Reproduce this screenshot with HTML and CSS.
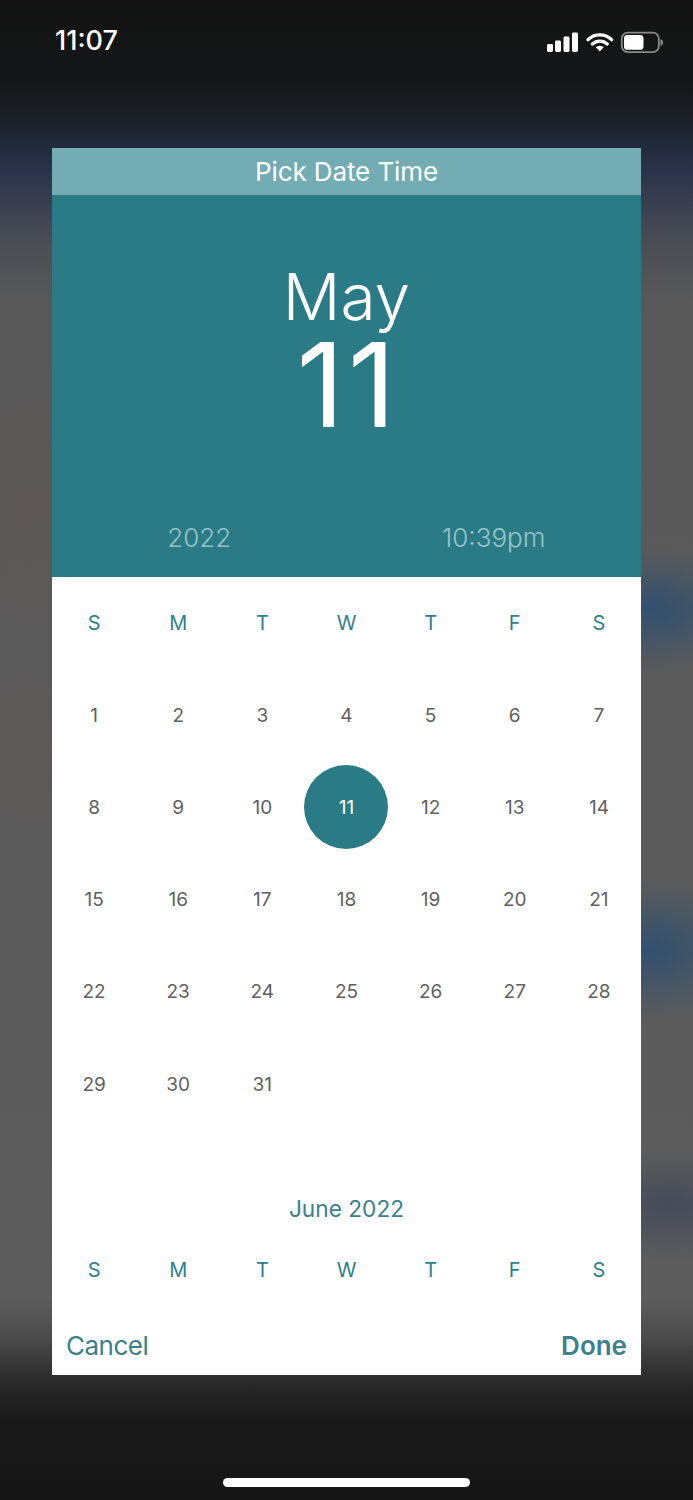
FILE: index.html
```html
<!DOCTYPE html>
<html lang="en">
<head>
<meta charset="utf-8">
<title>Pick Date Time</title>
<link rel="stylesheet" href="styles.css">
</head>
<body>
<div class="screen">
  <header class="status">
    <span class="clock">11:07</span>
    <svg class="status-icons" width="120" height="24" viewBox="0 0 120 24" aria-hidden="true">
      <rect x="0" y="13" width="6" height="8" rx="1.4" fill="#fff"/>
      <rect x="8" y="9.5" width="6" height="11.5" rx="1.4" fill="#fff"/>
      <rect x="16.5" y="5.5" width="6" height="15.5" rx="1.4" fill="#fff"/>
      <rect x="25" y="1.5" width="6" height="19.5" rx="1.4" fill="#fff"/>
      <path d="M41 8.6a17 17 0 0 1 23.6 0" fill="none" stroke="#fff" stroke-width="3.4" stroke-linecap="round"/>
      <path d="M45.3 13a11 11 0 0 1 15 0" fill="none" stroke="#fff" stroke-width="3.2" stroke-linecap="round"/>
      <path d="M48.8 16.2l4 4.4 4-4.4a6 6 0 0 0-8 0z" fill="#fff"/>
      <rect x="74.8" y="1.6" width="37" height="19.6" rx="6" fill="none" stroke="#8a8a8a" stroke-width="1.8"/>
      <rect x="77" y="4" width="19.5" height="14.8" rx="3.4" fill="#fff"/>
      <path d="M113.5 8v7a3.6 3.6 0 0 0 2.6-3.5 3.6 3.6 0 0 0-2.6-3.5z" fill="#8a8a8a"/>
    </svg>
  </header>

  <main class="dialog">
    <div class="title">Pick Date Time</div>
    <section class="hero">
      <div class="hero-month">May</div>
      <div class="hero-day">11</div>
      <div class="hero-meta">
        <span class="hero-year">2022</span>
        <span class="hero-time">10:39pm</span>
      </div>
    </section>
    <section class="calendar">
      <div class="row week"><span>S</span><span>M</span><span>T</span><span>W</span><span>T</span><span>F</span><span>S</span></div>
      <div class="row"><span>1</span><span>2</span><span>3</span><span>4</span><span>5</span><span>6</span><span>7</span></div>
      <div class="row"><span>8</span><span>9</span><span>10</span><span class="selected">11</span><span>12</span><span>13</span><span>14</span></div>
      <div class="row"><span>15</span><span>16</span><span>17</span><span>18</span><span>19</span><span>20</span><span>21</span></div>
      <div class="row"><span>22</span><span>23</span><span>24</span><span>25</span><span>26</span><span>27</span><span>28</span></div>
      <div class="row"><span>29</span><span>30</span><span>31</span><span></span><span></span><span></span><span></span></div>
      <div class="next-month">June 2022</div>
      <div class="row week next-week"><span>S</span><span>M</span><span>T</span><span>W</span><span>T</span><span>F</span><span>S</span></div>
    </section>
    <footer class="actions">
      <span class="cancel">Cancel</span>
      <span class="done">Done</span>
    </footer>
  </main>

  <div class="home-zone"><div class="home-bar"></div></div>
</div>
</body>
</html>
```
FILE: styles.css
```css
* { box-sizing: border-box; }
html, body { margin: 0; padding: 0; }
body {
  width: 693px;
  height: 1500px;
  overflow: hidden;
  background: #161616;
  font-family: Inter, "Noto Sans", "Liberation Sans", sans-serif;
}
.screen {
  width: 693px;
  height: 1500px;
  display: flex;
  flex-direction: column;
  background:
    radial-gradient(ellipse 110px 62px at 650px 610px, #31506f 0%, rgba(49,80,111,0) 100%),
    radial-gradient(ellipse 110px 70px at 650px 950px, #31506f 0%, rgba(49,80,111,0) 100%),
    radial-gradient(ellipse 120px 55px at 670px 1205px, #454b5a 0%, rgba(69,75,90,0) 100%),
    radial-gradient(ellipse 60px 120px at 30px 510px, rgba(100,80,70,.22) 0%, rgba(100,80,70,0) 100%),
    radial-gradient(ellipse 60px 80px at 30px 750px, rgba(100,80,70,.16) 0%, rgba(100,80,70,0) 100%),
    linear-gradient(180deg, #131313 0, #151617 80px, #1a1e25 115px, #222a3a 145px, #2a3349 170px, #3a404f 205px, #4b4e55 245px, #585858 300px, #5b5a5a 600px, #5c5c5c 1300px, #4a4a4a 1340px, #2c2c2c 1378px, #191919 1420px, #161616 1500px);
}
.status {
  height: 148px;
  flex: none;
  padding: 24px 26px 0 55px;
  display: flex;
  justify-content: space-between;
  align-items: flex-start;
}
.clock {
  color: #fff;
  font-size: 27px;
  font-weight: 500;
  line-height: 34px;
}
.status-icons { margin-top: 7px; flex: none; }
.dialog {
  margin-left: 52px;
  width: 589px;
  height: 1227px;
  flex: none;
  display: flex;
  flex-direction: column;
  background: #fff;
}
.title {
  height: 47px;
  flex: none;
  background: #74acb3;
  color: #fff;
  font-size: 26px;
  line-height: 47px;
  letter-spacing: -0.1px;
  text-align: center;
  font-weight: 400;
}
.hero {
  height: 382px;
  flex: none;
  background: #2b7b87;
  color: #fff;
  display: flex;
  flex-direction: column;
  align-items: center;
  padding-top: 66px;
}
.hero-month {
  font-size: 64px;
  line-height: 72px;
  font-weight: 300;
}
.hero-day {
  font-size: 117px;
  line-height: 100px;
  font-weight: 400;
  letter-spacing: 4px;
  margin-top: 2px;
  padding-left: 3px;
}
.hero-meta {
  width: 100%;
  margin-top: 86px;
  display: grid;
  grid-template-columns: 1fr 1fr;
  color: #97c3c8;
  font-size: 26px;
  line-height: 34px;
  font-weight: 300;
  text-align: center;
}
.calendar {
  flex: 1;
}
.row {
  display: grid;
  grid-template-columns: repeat(7, 1fr);
  height: 92.2px;
  align-items: center;
  justify-items: center;
  color: #5f5f5f;
  font-size: 19px;
  font-weight: 400;
}
.row span {
  width: 84px;
  height: 84px;
  display: flex;
  align-items: center;
  justify-content: center;
}
.week {
  color: #2f7f8b;
  font-size: 20px;
}
.selected {
  background: #2b7b87;
  color: #fff;
  border-radius: 50%;
}
.next-month {
  margin-top: 62px;
  text-align: center;
  color: #3b808b;
  font-size: 22.7px;
  line-height: 34px;
}
.next-week { height: 87px; }
.actions {
  height: 60px;
  flex: none;
  padding: 0 14px;
  display: flex;
  justify-content: space-between;
  align-items: center;
  color: #3b808b;
  font-size: 26px;
}
.cancel { letter-spacing: -0.5px; }
.done { font-weight: 600; }
.home-zone {
  flex: 1;
  position: relative;
}
.home-bar {
  position: absolute;
  left: 223px;
  top: 103px;
  width: 247px;
  height: 9px;
  border-radius: 5px;
  background: #fff;
}
```
